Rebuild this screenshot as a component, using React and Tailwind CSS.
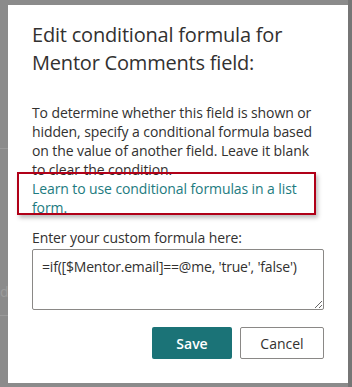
export default function App() {
  return (
    <div
      className="relative h-[387px] w-[352px] overflow-hidden bg-[#8b8b8b]"
      style={{ fontFamily: '"Open Sans", "Noto Sans", sans-serif' }}
    >
      {/* faint page behind the overlay */}
      <div className="absolute left-0 top-[148px] h-px w-[8px] bg-[#9a9a9a]" />
      <div className="absolute left-0 top-[315px] h-px w-[8px] bg-[#9a9a9a]" />
      <div className="absolute left-0 top-[281px] text-[14px] text-[#9c9c9c]">d</div>
      <div className="absolute right-0 top-[281px] text-[14px] text-[#8e8e8e]">w</div>
      <div className="absolute right-0 top-0 h-full w-[4px] bg-[#767676]" />

      {/* Dialog */}
      <div className="relative ml-[8px] mt-[5px] flex h-[378px] w-[340px] flex-col bg-white px-[24px] pt-[16px] text-[#323130]">
        <h1 className="text-[20px] font-normal leading-[28px] tracking-[-0.2px]">
          Edit conditional formula for Mentor Comments field:
        </h1>

        <p className="mt-[26px] text-[14px] leading-[19px] tracking-[-0.1px]">
          To determine whether this field is shown or
          <br />
          hidden, specify a conditional formula based
          <br />
          on the value of another field. Leave it blank
          <br />
          to clear the condition.
        </p>
        <a className="text-[14px] leading-[19px] tracking-[-0.1px] text-[#1d7b80]">
          Learn to use conditional formulas in a list
          <br />
          form.
        </a>

        <label className="mt-[11px] text-[14px] leading-[19px] tracking-[-0.1px]">
          Enter your custom formula here:
        </label>
        <textarea
          className="mt-[2px] h-[61px] w-full resize-y rounded-[2px] border border-[#8a8886] px-[9px] py-[7px] text-[14px] leading-[19px] tracking-[-0.2px] text-[#323130] outline-none"
          defaultValue="=if([$Mentor.email]==@me, 'true', 'false')"
        />

        <div className="mt-[17px] flex justify-end gap-[8px]">
          <button className="h-[32px] w-[80px] rounded-[2px] bg-[#1b7377] text-[14px] font-semibold text-white">
            Save
          </button>
          <button className="h-[32px] w-[84px] rounded-[2px] border border-[#8a8886] bg-white text-[14px] text-[#323130]">
            Cancel
          </button>
        </div>

        {/* annotation box */}
        <div className="absolute left-[9px] top-[167px] h-[43px] w-[299px] border-2 border-[#b00018] shadow-[2px_3px_4px_rgba(0,0,0,0.25)]" />
      </div>
    </div>
  );
}
